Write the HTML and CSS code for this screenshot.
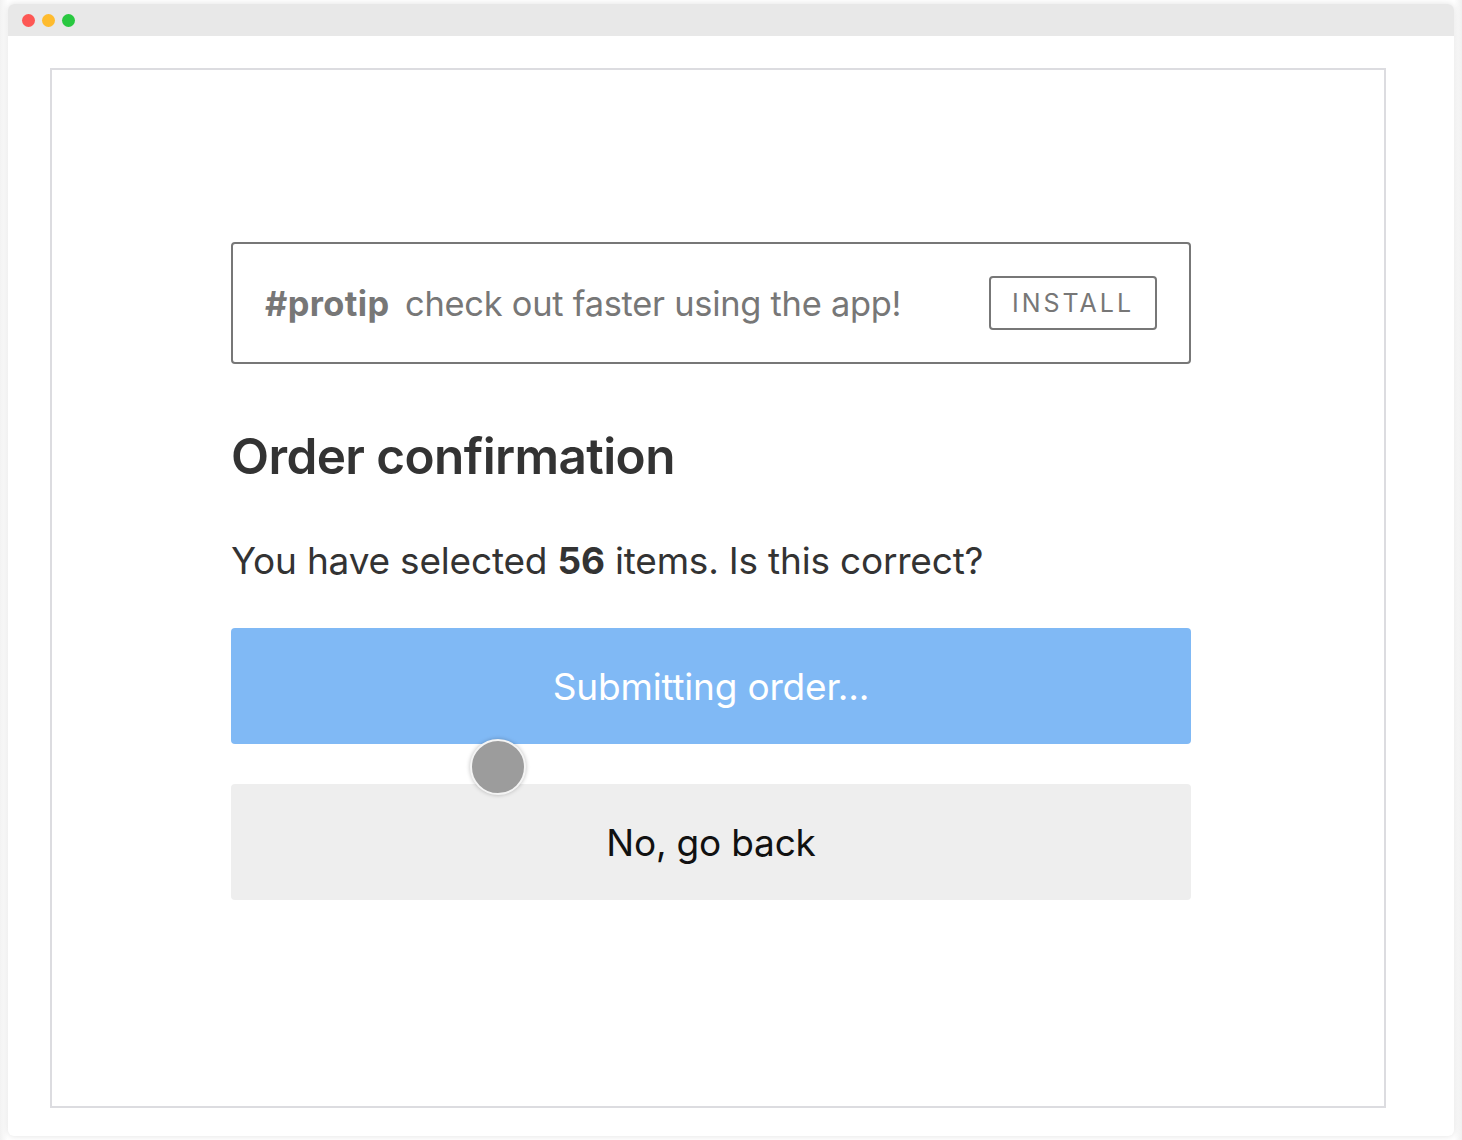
FILE: index.html
```html
<!DOCTYPE html>
<html>
<head>
<meta charset="utf-8">
<link rel="stylesheet" href="styles.css">
</head>
<body>
<div class="window">
  <div class="titlebar">
    <span class="dot red"></span>
    <span class="dot yellow"></span>
    <span class="dot green"></span>
  </div>
  <div class="content">
    <div class="frame">
      <div class="column">
        <div class="protip">
          <p class="tip"><b>#protip</b> check out faster using the app!</p>
          <button class="install">INSTALL</button>
        </div>
        <h1 class="title">Order confirmation</h1>
        <p class="question">You have selected <b>56</b> items. Is this correct?</p>
        <div class="actions">
          <button class="btn primary">Submitting order...</button>
          <button class="btn secondary">No, go back</button>
          <span class="cursor"></span>
        </div>
      </div>
    </div>
  </div>
</div>
</body>
</html>
```
FILE: styles.css
```css
* { box-sizing: border-box; }
html, body { margin: 0; padding: 0; background: #fff; }
body {
  font-family: Inter, "Liberation Sans", Arial, sans-serif;
  width: 1462px;
  height: 1140px;
  overflow: hidden;
  background: linear-gradient(90deg, #f2f2f2 0, #fff 8px, #fff 1454px, #f0f0f0 1462px);
  padding-top: 4px;
}
.window {
  margin: 0 8px;
  width: 1446px;
  height: 1132px;
  background: #fff;
  border-radius: 6px;
  box-shadow: 0 0 6px rgba(0,0,0,0.12);
  overflow: hidden;
}
.titlebar {
  height: 32px;
  background: #e8e8e8;
  display: flex;
  align-items: center;
  gap: 7px;
  padding-left: 14px;
}
.dot { width: 13px; height: 13px; border-radius: 50%; display: block; }
.red { background: #fd5754; }
.yellow { background: #febb2e; }
.green { background: #29c840; }
.content { padding: 32px 0 0 42px; }
.frame {
  width: 1336px;
  height: 1040px;
  border: 2px solid #dcdce0;
  padding: 172px 0 0 179px;
}
.column { width: 960px; }
.protip {
  height: 122px;
  border: 2px solid #777;
  border-radius: 4px;
  display: flex;
  align-items: center;
  justify-content: space-between;
  padding: 0 32px 0 32px;
}
.tip {
  margin: 0;
  font-size: 34.4px;
  color: #777;
  letter-spacing: -0.25px;
}
.tip b { margin-right: 6px; letter-spacing: 0.4px; }
.install {
  font-family: inherit;
  background: #fff;
  border: 2px solid #777;
  border-radius: 4px;
  color: #777;
  font-size: 25px;
  letter-spacing: 3px;
  width: 168px;
  height: 54px;
  padding: 0 0 0 0;
}
.title {
  margin: 62px 0 0 0;
  font-size: 49.5px;
  font-weight: 600;
  color: #333;
  line-height: 60px;
  letter-spacing: -0.6px;
}
.question {
  margin: 51px 0 0 0;
  font-size: 37px;
  color: #333;
  line-height: 48px;
  letter-spacing: -0.2px;
}
.actions {
  position: relative;
  margin-top: 43px;
  display: flex;
  flex-direction: column;
  gap: 40px;
}
.btn {
  font-family: inherit;
  border: none;
  border-radius: 4px;
  height: 116px;
  width: 960px;
  font-size: 37px;
  letter-spacing: -0.2px;
}
.primary { background: #80b9f5; color: #fff; }
.secondary { background: #eeeeee; color: #111; }
.cursor {
  position: absolute;
  left: 239px;
  top: 111px;
  width: 56px;
  height: 56px;
  border-radius: 50%;
  background: #9c9c9c;
  border: 2px solid #f4f4f4;
  box-shadow: 0 0 4px rgba(0,0,0,0.25);
}
```
